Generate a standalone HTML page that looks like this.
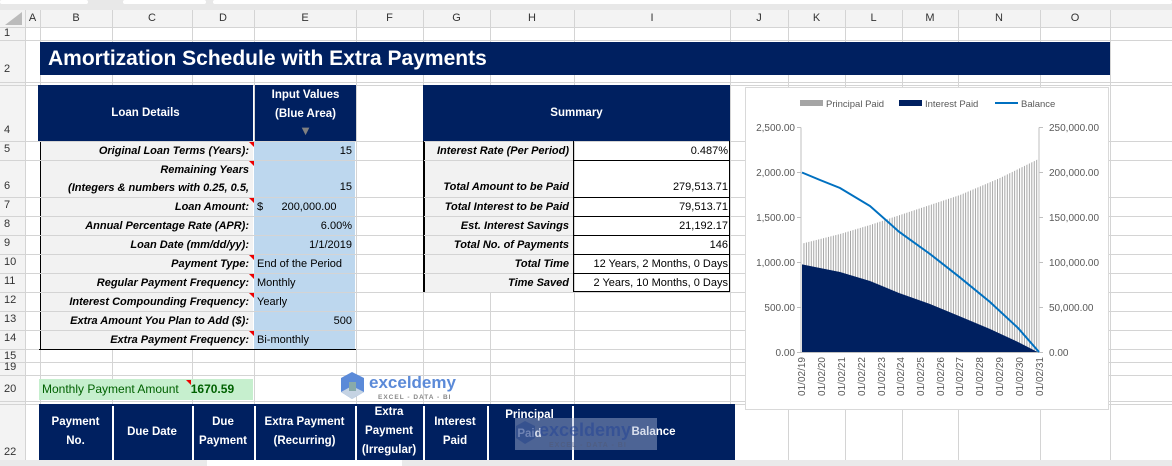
<!DOCTYPE html>
<html><head><meta charset="utf-8"><style>
*{margin:0;padding:0;box-sizing:border-box}
body{width:1172px;height:466px;overflow:hidden;background:#fff;position:relative;font-family:"Liberation Sans",Arial,sans-serif;font-size:11px;color:#000}
.a{position:absolute;white-space:nowrap;overflow:hidden}
.hd{background:#002060;color:#fff;font-weight:bold;display:flex;align-items:center;justify-content:center;text-align:center;line-height:19px;font-size:11.5px}
.lb{background:#f2f2f2;font-style:italic;font-weight:bold;text-align:right;padding-right:4px;border-left:1px solid #000}
.iv{background:#bdd7ee;padding:0 3px}
.r{text-align:right}
.ch{position:absolute;top:10px;height:17px;font-size:11px;color:#333;text-align:center;line-height:17px}
.rh{position:absolute;left:0;width:25px;font-size:11px;color:#333;padding-left:4px}
.tri{position:absolute;width:0;height:0;border-top:5px solid #e00;border-left:5px solid transparent}
</style></head><body>
<svg class="a" style="left:0;top:0" width="1172" height="466">
<rect x="0" y="0" width="1172" height="10" fill="#e8e8e8"/>
<rect x="0" y="0" width="88" height="4" rx="2" fill="#fff"/>
<rect x="123" y="0" width="83" height="4" rx="2" fill="#fff"/>
<rect x="213" y="0" width="959" height="4" rx="2" fill="#fff"/>
<rect x="0" y="10" width="1172" height="17" fill="#f3f3f3"/>
<rect x="0" y="10" width="25" height="456" fill="#f3f3f3"/>
<g stroke="#d4d4d4" stroke-width="1">
<path d="M25.5 10V466M40.5 10V466M112.5 10V466M192.5 10V466M254.5 10V466M356.5 10V466M423.5 10V466M490.5 10V466M574.5 10V466M730.5 10V466M788.5 10V466M845.5 10V466M902.5 10V466M958.5 10V466M1040.5 10V466M1110.5 10V466"/>
<path d="M0 27.5H1172M0 40.5H1172M0 82.5H1172M0 85.5H1172M0 141.5H1172M0 160.5H1172M0 197.5H1172M0 216.5H1172M0 235.5H1172M0 254.5H1172M0 273.5H1172M0 292.5H1172M0 311.5H1172M0 330.5H1172M0 349.5H1172M0 362.5H1172M0 375.5H1172M0 401.5H1172M0 404.5H1172"/>
</g>
<path d="M5 25L22 25L22 12Z" fill="#bbb"/>
<rect x="0" y="460" width="1172" height="6" fill="#eaeaea"/>
<rect x="207" y="460" width="195" height="6" fill="#fff"/>
</svg>
<div class="ch" style="left:25px;width:15px">A</div><div class="ch" style="left:40px;width:72px">B</div><div class="ch" style="left:112px;width:80px">C</div><div class="ch" style="left:192px;width:62px">D</div><div class="ch" style="left:254px;width:102px">E</div><div class="ch" style="left:356px;width:67px">F</div><div class="ch" style="left:423px;width:67px">G</div><div class="ch" style="left:490px;width:84px">H</div><div class="ch" style="left:574px;width:156px">I</div><div class="ch" style="left:730px;width:58px">J</div><div class="ch" style="left:788px;width:57px">K</div><div class="ch" style="left:845px;width:57px">L</div><div class="ch" style="left:902px;width:56px">M</div><div class="ch" style="left:958px;width:82px">N</div><div class="ch" style="left:1040px;width:70px">O</div>
<div class="rh" style="top:27px">1</div><div class="rh" style="top:63px">2</div><div class="rh" style="top:124px">4</div><div class="rh" style="top:143px">5</div><div class="rh" style="top:180px">6</div><div class="rh" style="top:199px">7</div><div class="rh" style="top:218px">8</div><div class="rh" style="top:237px">9</div><div class="rh" style="top:256px">10</div><div class="rh" style="top:275px">11</div><div class="rh" style="top:294px">12</div><div class="rh" style="top:313px">13</div><div class="rh" style="top:332px">14</div><div class="rh" style="top:350px">15</div><div class="rh" style="top:361px">19</div><div class="rh" style="top:383px">20</div><div class="rh" style="top:446px">22</div>

<div class="a hd" style="left:40px;top:42px;width:1070px;height:33px;justify-content:flex-start;padding-left:8px;font-size:21px">Amortization Schedule with Extra Payments</div>

<div class="a hd" style="left:38px;top:85px;width:215px;height:56px">Loan Details</div>
<div class="a hd" style="left:255px;top:85px;width:101px;height:56px;flex-direction:column;justify-content:flex-start;padding-top:1px">Input Values<br>(Blue Area)<span style="color:#808080;font-size:13px;line-height:13px">▼</span></div>

<div class="a lb" style="left:40px;top:142px;width:213px;height:18px;line-height:18px">Original Loan Terms (Years):</div>
<div class="a lb" style="left:40px;top:161px;width:213px;height:36px;line-height:18px">Remaining Years<br>(Integers &amp; numbers with 0.25, 0.5,</div>
<div class="a lb" style="left:40px;top:198px;width:213px;height:18px;line-height:18px">Loan Amount:</div>
<div class="a lb" style="left:40px;top:217px;width:213px;height:18px;line-height:18px">Annual Percentage Rate (APR):</div>
<div class="a lb" style="left:40px;top:236px;width:213px;height:18px;line-height:18px">Loan Date (mm/dd/yy):</div>
<div class="a lb" style="left:40px;top:255px;width:213px;height:18px;line-height:18px">Payment Type:</div>
<div class="a lb" style="left:40px;top:274px;width:213px;height:18px;line-height:18px">Regular Payment Frequency:</div>
<div class="a lb" style="left:40px;top:293px;width:213px;height:18px;line-height:18px">Interest Compounding Frequency:</div>
<div class="a lb" style="left:40px;top:312px;width:213px;height:18px;line-height:18px">Extra Amount You Plan to Add ($):</div>
<div class="a lb" style="left:40px;top:331px;width:213px;height:18px;line-height:18px">Extra Payment Frequency:</div>

<div class="a iv r" style="left:254px;top:142px;width:101px;height:18px;line-height:18px">15</div>
<div class="a iv r" style="left:254px;top:161px;width:101px;height:36px;line-height:52px">15</div>
<div class="a iv" style="left:254px;top:198px;width:101px;height:18px;line-height:18px">$&nbsp;&nbsp;&nbsp;&nbsp;&nbsp;&nbsp;200,000.00</div>
<div class="a iv r" style="left:254px;top:217px;width:101px;height:18px;line-height:18px">6.00%</div>
<div class="a iv r" style="left:254px;top:236px;width:101px;height:18px;line-height:18px">1/1/2019</div>
<div class="a iv" style="left:254px;top:255px;width:101px;height:18px;line-height:18px">End of the Period</div>
<div class="a iv" style="left:254px;top:274px;width:101px;height:18px;line-height:18px">Monthly</div>
<div class="a iv" style="left:254px;top:293px;width:101px;height:18px;line-height:18px">Yearly</div>
<div class="a iv r" style="left:254px;top:312px;width:101px;height:18px;line-height:18px">500</div>
<div class="a iv" style="left:254px;top:331px;width:101px;height:18px;line-height:18px">Bi-monthly</div>
<div class="a" style="left:39px;top:349px;width:317px;height:1px;background:#000"></div>
<div class="tri" style="left:249px;top:142px"></div><div class="tri" style="left:249px;top:161px"></div><div class="tri" style="left:249px;top:198px"></div><div class="tri" style="left:249px;top:255px"></div><div class="tri" style="left:249px;top:274px"></div><div class="tri" style="left:249px;top:293px"></div><div class="tri" style="left:249px;top:331px"></div>

<div class="a hd" style="left:423px;top:85px;width:307px;height:56px">Summary</div>
<div class="a" style="left:423px;top:141px;width:307px;height:151px;border:1px solid #000;border-top:none"></div>
<div class="a lb" style="left:424px;top:142px;width:149px;height:18px;line-height:18px">Interest Rate (Per Period)</div>
<div class="a lb" style="left:424px;top:161px;width:149px;height:36px;line-height:52px">Total Amount to be Paid</div>
<div class="a lb" style="left:424px;top:198px;width:149px;height:18px;line-height:18px">Total Interest to be Paid</div>
<div class="a lb" style="left:424px;top:217px;width:149px;height:18px;line-height:18px">Est. Interest Savings</div>
<div class="a lb" style="left:424px;top:236px;width:149px;height:18px;line-height:18px">Total No. of Payments</div>
<div class="a lb" style="left:424px;top:255px;width:149px;height:18px;line-height:18px">Total Time</div>
<div class="a lb" style="left:424px;top:274px;width:149px;height:18px;line-height:18px">Time Saved</div>
<svg class="a" style="left:573px;top:141px" width="157" height="151"><g stroke="#000" fill="none"><path d="M0.5 0V151M0 19.5H157M0 56.5H157M0 75.5H157M0 94.5H157M0 113.5H157M0 132.5H157"/></g></svg>
<div class="a r" style="left:575px;top:142px;width:153px;height:18px;line-height:18px">0.487%</div>
<div class="a r" style="left:575px;top:161px;width:153px;height:36px;line-height:52px">279,513.71</div>
<div class="a r" style="left:575px;top:198px;width:153px;height:18px;line-height:18px">79,513.71</div>
<div class="a r" style="left:575px;top:217px;width:153px;height:18px;line-height:18px">21,192.17</div>
<div class="a r" style="left:575px;top:236px;width:153px;height:18px;line-height:18px">146</div>
<div class="a r" style="left:575px;top:255px;width:153px;height:18px;line-height:18px">12 Years, 2 Months, 0 Days</div>
<div class="a r" style="left:575px;top:274px;width:153px;height:18px;line-height:18px">2 Years, 10 Months, 0 Days</div>

<div class="a" style="left:39px;top:379px;width:214px;height:21px;background:#c6efce;color:#006100;line-height:21px;padding-left:3px;font-size:12px">Monthly Payment Amount<b style="margin-left:12px">1670.59</b></div>
<div class="tri" style="left:186px;top:380px"></div>

<svg class="a" style="left:338px;top:370px" width="130" height="32">
<path d="M14 2L26 8V22L14 29L3 22V8Z" fill="#5b8ad8"/><path d="M14 16L26 22L14 29L3 22Z" fill="#c5d3e3"/><path d="M11 12H18V21H11Z" fill="#8aa"/>
<text x="31" y="18" font-family="Liberation Sans" font-weight="bold" font-size="17" fill="#5b8ad8">exceldemy</text>
<text x="40" y="29" font-family="Liberation Sans" font-weight="bold" font-size="6.5" fill="#888" letter-spacing="1">EXCEL - DATA - BI</text>
</svg>

<div class="a hd" style="left:39px;top:404px;width:696px;height:56px"></div>
<div class="a" style="left:39px;top:404px;width:696px;height:56px;color:#fff;font-weight:bold;line-height:19px;font-size:11.5px">
<div class="a" style="left:0;top:9px;width:73px;text-align:center">Payment<br>No.</div>
<div class="a" style="left:73px;top:19px;width:80px;text-align:center">Due Date</div>
<div class="a" style="left:153px;top:9px;width:62px;text-align:center">Due<br>Payment</div>
<div class="a" style="left:215px;top:9px;width:101px;text-align:center">Extra Payment<br>(Recurring)</div>
<div class="a" style="left:316px;top:-1px;width:68px;text-align:center">Extra<br>Payment<br>(Irregular)</div>
<div class="a" style="left:384px;top:9px;width:64px;text-align:center">Interest<br>Paid</div>
<div class="a" style="left:448px;top:2px;width:85px;text-align:center">Principal<br>Paid</div>
<div class="a" style="left:533px;top:19px;width:163px;text-align:center">Balance</div>
<div class="a" style="left:73px;top:2px;width:2px;height:54px;background:#fff"></div>
<div class="a" style="left:153px;top:2px;width:2px;height:54px;background:#fff"></div>
<div class="a" style="left:215px;top:2px;width:2px;height:54px;background:#fff"></div>
<div class="a" style="left:316px;top:2px;width:2px;height:54px;background:#fff"></div>
<div class="a" style="left:384px;top:2px;width:2px;height:54px;background:#fff"></div>
<div class="a" style="left:448px;top:2px;width:2px;height:54px;background:#fff"></div>
<div class="a" style="left:533px;top:2px;width:2px;height:54px;background:#fff"></div>
</div>
<svg class="a" style="left:515px;top:418px" width="142" height="32">
<rect width="142" height="32" fill="rgba(170,185,215,0.45)"/>
<path d="M10 3L20 8V20L10 26L1 20V8Z" fill="rgba(40,70,140,0.6)"/>
<text x="24" y="18" font-family="Liberation Sans" font-weight="bold" font-size="18" fill="rgba(40,70,150,0.6)">exceldemy</text>
<text x="34" y="29" font-family="Liberation Sans" font-weight="bold" font-size="7" fill="rgba(80,90,120,0.6)" letter-spacing="1">EXCEL - DATA - BI</text>
</svg>

<svg class="a" style="left:0;top:0" width="1172" height="466" font-family="Liberation Sans">
<defs><pattern id="p" width="2.45" height="10" patternUnits="userSpaceOnUse" x="801"><rect width="1" height="10" fill="#a5a5a5"/></pattern></defs>
<rect x="745.5" y="87.5" width="363" height="322" fill="#fff" stroke="#d9d9d9"/>
<rect x="800" y="100" width="23" height="6" fill="#a5a5a5"/><text x="826" y="107" font-size="9.5" fill="#595959">Principal Paid</text>
<rect x="899" y="100" width="23" height="6" fill="#002060"/><text x="925" y="107" font-size="9.5" fill="#595959">Interest Paid</text>
<rect x="995" y="102" width="23" height="2" fill="#0070c0"/><text x="1021" y="107" font-size="9.5" fill="#595959">Balance</text>
<polygon points="802,352.7 802,243.6 840,234 870,225 900,215 930,205 960,195 1000,178 1039,158.8 1039,352.7" fill="url(#p)"/>
<polygon points="802,352.7 802,264.4 820,268 840,272 870,281 899,293 930,304 959,316 990,329 1018,342 1039,352.7" fill="#002060"/>
<path d="M801 127.5V353M1039 127.5V353M797 127.5H801M797 172.5H801M797 217.5H801M797 262.5H801M797 307.5H801M797 352.5H801M1039 127.5H1043M1039 172.5H1043M1039 217.5H1043M1039 262.5H1043M1039 307.5H1043M1039 352.5H1043M801 352.5H1039" stroke="#bfbfbf" fill="none"/>
<polyline points="802,172.5 820,180 840,188 870,206 899,231.7 930,254 959,276.7 990,302 1018,328 1039,352" fill="none" stroke="#0070c0" stroke-width="2"/>
<g font-size="10" fill="#595959" text-anchor="end">
<text x="795" y="131">2,500.00</text><text x="795" y="176">2,000.00</text><text x="795" y="221">1,500.00</text><text x="795" y="266">1,000.00</text><text x="795" y="311">500.00</text><text x="795" y="356">0.00</text>
</g>
<g font-size="10" fill="#595959">
<text x="1049" y="131">250,000.00</text><text x="1049" y="176">200,000.00</text><text x="1049" y="221">150,000.00</text><text x="1049" y="266">100,000.00</text><text x="1049" y="311">50,000.00</text><text x="1049" y="356">0.00</text>
</g>
<g font-size="10" fill="#595959" text-anchor="end">
<text transform="translate(805,357) rotate(-90)">01/02/19</text>
<text transform="translate(825,357) rotate(-90)">01/02/20</text>
<text transform="translate(845,357) rotate(-90)">01/02/21</text>
<text transform="translate(865,357) rotate(-90)">01/02/22</text>
<text transform="translate(885,357) rotate(-90)">01/02/23</text>
<text transform="translate(904,357) rotate(-90)">01/02/24</text>
<text transform="translate(924,357) rotate(-90)">01/02/25</text>
<text transform="translate(944,357) rotate(-90)">01/02/26</text>
<text transform="translate(963,357) rotate(-90)">01/02/27</text>
<text transform="translate(983,357) rotate(-90)">01/02/28</text>
<text transform="translate(1003,357) rotate(-90)">01/02/29</text>
<text transform="translate(1023,357) rotate(-90)">01/02/30</text>
<text transform="translate(1043,357) rotate(-90)">01/02/31</text>
</g>
</svg>
</body></html>
